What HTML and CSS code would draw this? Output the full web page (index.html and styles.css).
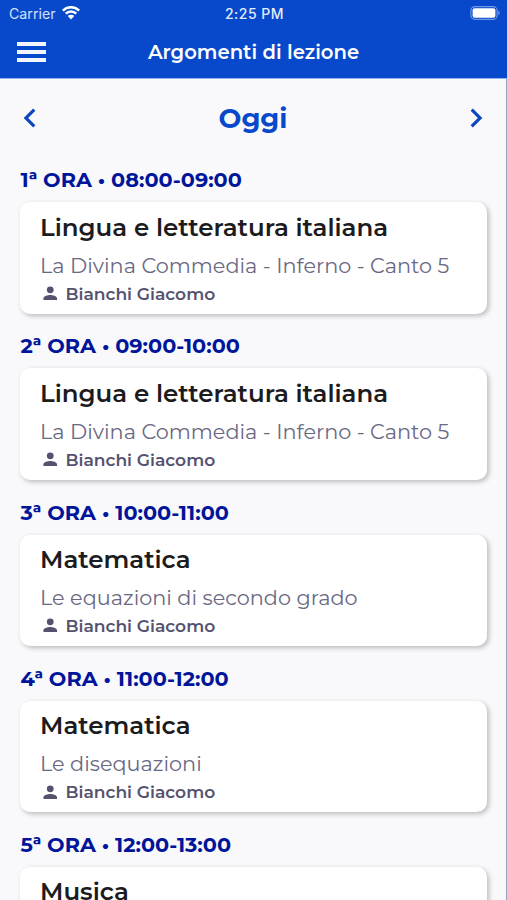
FILE: index.html
```html
<!DOCTYPE html>
<html lang="it">
<head>
<meta charset="UTF-8" />
<meta name="viewport" content="width=device-width, initial-scale=1" />
<title>Argomenti di lezione</title>
<link rel="stylesheet" href="styles.css">
</head>
<body>

<svg class="sprite" aria-hidden="true">
  <symbol id="persona" viewBox="0 0 24 24">
    <path d="M12 12a4 4 0 1 0 0-8 4 4 0 0 0 0 8zm0 2c-2.67 0-8 1.34-8 4v2h16v-2c0-2.66-5.33-4-8-4z" />
  </symbol>
</svg>

<header class="header">
  <!-- Barra di stato -->
  <div class="status">
    <div class="carrier">
      <span>Carrier</span>
      <svg class="wifi" viewBox="0 0 18 14">
        <path d="M0.8 4.6a11.6 11.6 0 0 1 16.4 0M3.7 7.6a7.5 7.5 0 0 1 10.6 0" />
        <path class="pieno" d="M9 13.4L5.7 10.1a4.7 4.7 0 0 1 6.6 0z" />
      </svg>
    </div>
    <div class="ora">2:25 PM</div>
    <div class="batteria">
      <svg viewBox="0 0 31 14">
        <rect class="bordo" x="0.9" y="0.7" width="26.2" height="12.6" rx="3.8" />
        <rect x="2.6" y="2.3" width="22.8" height="9.4" rx="2" />
        <path class="polo" d="M28.3 4.8c2 .5 2 3.9 0 4.4z" />
      </svg>
    </div>
  </div>
  <div class="navbar">
    <button class="menu" aria-label="Menu">
      <span></span><span></span><span></span>
    </button>
    <h1>Argomenti di lezione</h1>
  </div>
</header>

<main class="pagina">
  <!-- Giorno -->
  <div class="giorno">
    <svg viewBox="0 0 24 24"><path d="M15.41 16.58L10.83 12l4.58-4.59L14 6l-6 6 6 6z" /></svg>
    <h2>Oggi</h2>
    <svg viewBox="0 0 24 24"><path d="M8.59 16.58L13.17 12 8.59 7.41 10 6l6 6-6 6z" /></svg>
  </div>

  <!-- Lezioni -->
  <section class="lezione">
    <h3>1ª ORA • 08:00-09:00</h3>
    <div class="card">
      <h4>Lingua e letteratura italiana</h4>
      <p class="argomento">La Divina Commedia - Inferno - Canto 5</p>
      <p class="docente"><svg><use href="#persona" /></svg><span>Bianchi Giacomo</span></p>
    </div>
  </section>

  <section class="lezione">
    <h3>2ª ORA • 09:00-10:00</h3>
    <div class="card">
      <h4>Lingua e letteratura italiana</h4>
      <p class="argomento">La Divina Commedia - Inferno - Canto 5</p>
      <p class="docente"><svg><use href="#persona" /></svg><span>Bianchi Giacomo</span></p>
    </div>
  </section>

  <section class="lezione">
    <h3>3ª ORA • 10:00-11:00</h3>
    <div class="card">
      <h4>Matematica</h4>
      <p class="argomento">Le equazioni di secondo grado</p>
      <p class="docente"><svg><use href="#persona" /></svg><span>Bianchi Giacomo</span></p>
    </div>
  </section>

  <section class="lezione">
    <h3>4ª ORA • 11:00-12:00</h3>
    <div class="card">
      <h4>Matematica</h4>
      <p class="argomento">Le disequazioni</p>
      <p class="docente"><svg><use href="#persona" /></svg><span>Bianchi Giacomo</span></p>
    </div>
  </section>

  <section class="lezione">
    <h3>5ª ORA • 12:00-13:00</h3>
    <div class="card">
      <h4>Musica</h4>
    </div>
  </section>
</main>

</body>
</html>
```

FILE: styles.css
```css
* {
  box-sizing: border-box;
}
body {
  margin: 0;
  height: 100vh;
  display: flex;
  flex-direction: column;
  overflow: hidden;
  font-family: Montserrat, Inter, sans-serif;
  background-color: #f9f9fc;
}
h1, h2, h3, h4, p {
  margin: 0;
  white-space: nowrap;
}
.sprite {
  display: none;
}
.header {
  flex: none;
  height: 79px;
  background-color: #0849cc;
  border-bottom: 1px solid #8fb2ec;
  color: white;
}
/* Barra di stato */
.status {
  height: 28px;
  padding: 0 7px 0 9px;
  display: grid;
  grid-template-columns: 1fr auto 1fr;
  align-items: center;
  font-family: Inter, sans-serif;
  font-size: 14.2px;
  line-height: 28px;
}
.carrier {
  display: flex;
  align-items: center;
  gap: 6px;
  color: #d3e1fb;
}
.wifi {
  width: 18px;
  height: 14px;
  margin-top: -2px;
  fill: none;
  stroke: white;
  stroke-width: 2.5;
}
.wifi .pieno {
  fill: white;
  stroke: none;
}
.ora {
  font-weight: 500;
  font-size: 14px;
  letter-spacing: 0.5px;
  color: #e4edfd;
}
.batteria {
  justify-self: end;
  display: flex;
}
.batteria svg {
  width: 31px;
  height: 14px;
  margin: -2px -1px 0 0;
  fill: white;
}
.batteria .bordo {
  fill: none;
  stroke: #6f98e6;
  stroke-width: 1.2;
}
.batteria .polo {
  fill: #6f98e6;
}
.navbar {
  height: 48px;
  padding: 0 17px;
  display: grid;
  grid-template-columns: 1fr auto 1fr;
  align-items: center;
}
.navbar h1 {
  font-size: 19.6px;
  font-weight: 600;
}
.menu {
  width: 29px;
  padding: 0;
  display: flex;
  flex-direction: column;
  gap: 4px;
  background: none;
  border: none;
}
.menu span {
  height: 3.8px;
  background-color: #f2f6ff;
}
.pagina {
  flex: 1;
  min-height: 0;
  overflow: hidden;
  padding: 18px 19px 0 20px;
  border-right: 1px solid #9aa0c0;
}
/* Giorno */
.giorno {
  height: 42px;
  margin: 0 -8px 0 -9px;
  display: flex;
  align-items: center;
  justify-content: space-between;
  color: #0849cc;
}
.giorno h2 {
  font-size: 27.1px;
  font-weight: 700;
}
.giorno svg {
  width: 38px;
  height: 38px;
  margin-top: -1px;
  fill: #0b47bd;
}
/* Lezioni */
.lezione {
  height: 166.1px;
  padding-top: 23.4px;
}
.lezione h3 {
  height: 40px;
  padding-left: 0.5px;
  font-size: 20.8px;
  line-height: 36px;
  font-weight: 700;
  color: #00159a;
}
.card {
  height: 111.6px;
  padding: 8.6px 20px;
  background-color: white;
  border-radius: 10px;
  box-shadow: 2px 2px 5px rgba(0, 0, 0, 0.25);
}
.card h4 {
  font-size: 24.5px;
  line-height: 33px;
  font-weight: 600;
  color: #1c1b20;
}
.argomento {
  margin-top: 5px;
  font-size: 20.8px;
  line-height: 34px;
  font-weight: 400;
  color: #6a6883;
}
.docente {
  display: flex;
  align-items: center;
  gap: 5px;
  font-size: 17.1px;
  line-height: 21px;
  font-weight: 600;
  color: #55526f;
}
.docente svg {
  width: 20.5px;
  height: 20.5px;
  fill: #55526f;
}
```
